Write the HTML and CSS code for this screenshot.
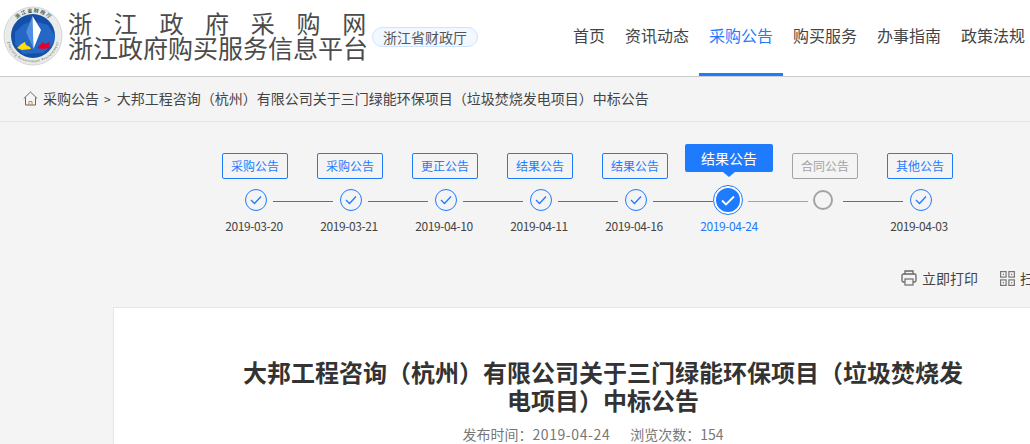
FILE: index.html
```html
<!DOCTYPE html>
<html lang="zh-CN">
<head>
<meta charset="utf-8">
<title>浙江政府采购网</title>
<link rel="stylesheet" href="styles.css">
</head>
<body>
<header class="header">
  <svg class="logo" width="60" height="60" viewBox="0 0 60 60">
    <defs>
      <path id="arcTop" d="M6.500 30a23.500 23.500 0 0 1 47 0"/>
      <path id="arcBottom" d="M3.500 30a26.500 26.500 0 0 0 53 0"/>
    </defs>
    <circle cx="30" cy="30" r="29" fill="#e9ecea" stroke="#d2d6d4"/>
    <circle cx="30" cy="30" r="22" fill="#1450a8"/>
    <path d="M12 26l9-8 10-3 14 4 7 11-3 9-9 8-20 1-8-10z" fill="#2467c4"/>
    <path d="M29.500 10L23 26l7.500 17z" fill="#4d8fe0"/>
    <path d="M29.500 10L38 24l-7.500 19z" fill="#fff"/>
    <path d="M14 42c3-3 5-5 8-6l1 3 4 2 1 2-9 1z" fill="#ffe000"/>
    <path d="M34 42l6-6 2 2 5-2-1 6-6 1z" fill="#e4002b"/>
    <text class="logo-ring" fill="#4a5a55"><textPath href="#arcTop" startOffset="50%" text-anchor="middle">浙 江 省 财 政 厅</textPath></text>
    <text class="logo-ring-small" fill="#5a6a65"><textPath href="#arcBottom" startOffset="50%" text-anchor="middle">Zhejiang Government Procurement</textPath></text>
  </svg>
  <div class="brand">
    <div class="brand-top">浙江政府采购网</div>
    <div class="brand-bottom">浙江政府购买服务信息平台</div>
  </div>
  <span class="badge">浙江省财政厅</span>
  <nav class="nav">
    <a class="nav-item">首页</a>
    <a class="nav-item">资讯动态</a>
    <a class="nav-item is-active">采购公告</a>
    <a class="nav-item">购买服务</a>
    <a class="nav-item">办事指南</a>
    <a class="nav-item">政策法规</a>
  </nav>
</header>

<div class="crumbs">
  <svg class="home" width="15" height="15" viewBox="0 0 15 15" fill="none" stroke="#666" stroke-width="1">
    <path d="M.8 7.500L7.500 1l6.700 6.500"/>
    <path d="M2.500 6.500v7.500h10V6.500"/>
    <path d="M6 14v-3.500h3V14" stroke="#c98a3a"/>
  </svg>
  <span>采购公告</span>
  <span class="sep">&gt;</span>
  <span>大邦工程咨询（杭州）有限公司关于三门绿能环保项目（垃圾焚烧发电项目）中标公告</span>
</div>

<main class="wrap">
  <section class="steps">
    <span class="tag c1">采购公告</span>
    <span class="tag c3">采购公告</span>
    <span class="tag c5">更正公告</span>
    <span class="tag c7">结果公告</span>
    <span class="tag c9">结果公告</span>
    <span class="tag tag-current c11">结果公告</span>
    <span class="tag tag-pending c13">合同公告</span>
    <span class="tag c15">其他公告</span>

    <span class="dot"><svg width="12" height="10" viewBox="0 0 12 10" fill="none" stroke="#1e7bfe" stroke-width="1.300"><path d="M1 5l3.500 3.500L11 1.500"/></svg></span>
    <span class="line"></span>
    <span class="dot"><svg width="12" height="10" viewBox="0 0 12 10" fill="none" stroke="#1e7bfe" stroke-width="1.300"><path d="M1 5l3.500 3.500L11 1.500"/></svg></span>
    <span class="line"></span>
    <span class="dot"><svg width="12" height="10" viewBox="0 0 12 10" fill="none" stroke="#1e7bfe" stroke-width="1.300"><path d="M1 5l3.500 3.500L11 1.500"/></svg></span>
    <span class="line"></span>
    <span class="dot"><svg width="12" height="10" viewBox="0 0 12 10" fill="none" stroke="#1e7bfe" stroke-width="1.300"><path d="M1 5l3.500 3.500L11 1.500"/></svg></span>
    <span class="line"></span>
    <span class="dot"><svg width="12" height="10" viewBox="0 0 12 10" fill="none" stroke="#1e7bfe" stroke-width="1.300"><path d="M1 5l3.500 3.500L11 1.500"/></svg></span>
    <span class="line"></span>
    <span class="dot-current"><span class="dot-current-inner"><svg width="14" height="11" viewBox="0 0 14 11" fill="none" stroke="#fff" stroke-width="1.800"><path d="M1 5.500l4 4L13 1.500"/></svg></span></span>
    <span class="line line-pending line-after"></span>
    <span class="dot-pending"></span>
    <span class="line line-after"></span>
    <span class="dot"><svg width="12" height="10" viewBox="0 0 12 10" fill="none" stroke="#1e7bfe" stroke-width="1.300"><path d="M1 5l3.500 3.500L11 1.500"/></svg></span>

    <span class="date c1">2019-03-20</span>
    <span class="date c3">2019-03-21</span>
    <span class="date c5">2019-04-10</span>
    <span class="date c7">2019-04-11</span>
    <span class="date c9">2019-04-16</span>
    <span class="date date-current c11">2019-04-24</span>
    <span class="date c15">2019-04-03</span>
  </section>

  <div class="tools">
    <span class="tool">
      <svg width="16" height="16" viewBox="0 0 16 16" fill="none" stroke="#666" stroke-width="1.300">
        <path d="M4 4V1h8v3"/>
        <rect x="1" y="4" width="14" height="8" rx="1.500"/>
        <rect x="4" y="9" width="8" height="6" fill="#f4f4f4" stroke="#777"/>
      </svg>
      立即打印
    </span>
    <span class="tool">
      <svg width="15" height="15" viewBox="0 0 15 15" fill="none" stroke="#777" stroke-width="1.200">
        <rect x=".6" y=".6" width="5.500" height="5.500"/>
        <rect x="8.900" y=".6" width="5.500" height="5.500"/>
        <rect x=".6" y="8.900" width="5.500" height="5.500"/>
        <rect x="8.900" y="8.900" width="5.500" height="5.500"/>
        <path d="M3.400 2.800v1.100M11.700 2.800v1.100M3.400 11.100v1.100M11.700 11.100v1.100" stroke="#777"/>
      </svg>
      扫码
    </span>
  </div>

  <article class="card">
    <h1 class="title">大邦工程咨询（杭州）有限公司关于三门绿能环保项目（垃圾焚烧发电项目）中标公告</h1>
    <div class="meta">
      <span>发布时间：<span class="meta-date">2019-04-24</span></span>
      <span>浏览次数：154</span>
    </div>
  </article>
</main>
</body>
</html>
```

FILE: styles.css
```css
html, body {
  margin: 0;
  height: 444px;
  overflow: hidden;
}

body {
  width: 1030px;
  background: #f4f4f4;
  color: #333;
  font-family: "Noto Sans CJK SC", "Noto Sans", sans-serif;
}

.header {
  display: flex;
  align-items: flex-start;
  width: 1100px;
  height: 76px;
  background: #fff;
  border-bottom: 1px solid #ccc;
}

.logo {
  flex: none;
  margin: 6px 0 0 3px;
}

.logo-ring {
  font-size: 5px;
  font-weight: 700;
}

.logo-ring-small {
  font-size: 3.500px;
  letter-spacing: .4px;
}

.brand {
  flex: none;
  margin: 10px 0 0 5px;
  width: 302px;
  color: #4b4b4b;
  font-size: 25px;
  line-height: 25px;
  white-space: nowrap;
}

.brand-top {
  font-size: 24px;
  letter-spacing: 21.700px;
}

.badge {
  flex: none;
  box-sizing: border-box;
  margin: 27px 0 0 2px;
  width: 106px;
  height: 20px;
  border: 1px solid #cfe3ff;
  border-radius: 10px;
  background: #f2f8ff;
  color: #555;
  font-size: 14px;
  line-height: 18px;
  text-align: center;
}

.nav {
  display: flex;
  flex: none;
  margin-left: 85px;
}

.nav-item {
  box-sizing: border-box;
  height: 76px;
  padding: 0 10px;
  color: #444;
  font-size: 16px;
  line-height: 71px;
  white-space: nowrap;
}

.nav-item.is-active {
  border-bottom: 3px solid #1e7bfe;
  color: #1e7bfe;
}

.crumbs {
  display: flex;
  align-items: center;
  width: 1100px;
  height: 42px;
  padding: 0 0 2px 23px;
  border-bottom: 1px solid #e4e4e4;
  color: #444;
  font-size: 14px;
  white-space: nowrap;
}

.home {
  margin-right: 5px;
}

.sep {
  margin: 0 6px 0 5px;
  font-size: 12px;
}

.wrap {
  width: 980px;
  margin-left: 113px;
}

.steps {
  display: grid;
  grid-template-columns: 36px 59px 36px 59px 36px 59px 36px 59px 36px 60px 30px 65px 30px 65px 34px;
  grid-template-rows: 35px 30px auto;
  row-gap: 6px;
  justify-content: start;
  padding: 22px 0 0 124px;
  justify-items: center;
  align-items: center;
}

.tag {
  box-sizing: border-box;
  grid-row: 1;
  align-self: end;
  width: 66px;
  height: 26px;
  border: 1px solid #1e7bfe;
  border-radius: 2px;
  color: #1e7bfe;
  font-size: 12px;
  line-height: 24px;
  text-align: center;
  white-space: nowrap;
}

.c1 { grid-column: 1; }
.c3 { grid-column: 3; }
.c5 { grid-column: 5; }
.c7 { grid-column: 7; }
.c9 { grid-column: 9; }
.c11 { grid-column: 11; }
.c13 { grid-column: 13; }
.c15 { grid-column: 15; }

.tag-current {
  position: relative;
  width: 88px;
  height: 28px;
  margin: 0 0 7px 2px;
  border: 0;
  background: #1e7bfe;
  color: #fff;
  font-size: 14px;
  line-height: 28px;
}

.tag-current::after {
  content: "";
  position: absolute;
  left: 38px;
  top: 28px;
  border: 6px solid transparent;
  border-top: 5px solid #1e7bfe;
  border-bottom: 0;
}

.tag-pending {
  margin-left: 4px;
  border-color: #a3a3a3;
  color: #a3a3a3;
}

.dot {
  display: flex;
  box-sizing: border-box;
  grid-row: 2;
  align-items: center;
  justify-content: center;
  width: 22px;
  height: 22px;
  margin-left: 2px;
  border: 1.500px solid #1e7bfe;
  border-radius: 50%;
}

.dot-current {
  display: flex;
  box-sizing: border-box;
  grid-row: 2;
  align-items: center;
  justify-content: center;
  width: 30px;
  height: 30px;
  border: 1px solid #1e7bfe;
  border-radius: 50%;
  background: #fff;
}

.dot-current-inner {
  display: flex;
  align-items: center;
  justify-content: center;
  width: 24px;
  height: 24px;
  border-radius: 50%;
  background: #1e7bfe;
}

.dot-pending {
  box-sizing: border-box;
  grid-row: 2;
  width: 20px;
  height: 20px;
  border: 2px solid #a3a3a3;
  border-radius: 50%;
}

.line {
  grid-row: 2;
  width: 60px;
  height: 1px;
  margin-top: 2px;
  background: #1e7bfe;
}

.line-after {
  justify-self: end;
}

.line-pending {
  background: #a3a3a3;
}

.date {
  grid-row: 3;
  margin: -4px 2px 0 0;
  color: #444;
  font-size: 12px;
  letter-spacing: -.4px;
  line-height: 18px;
  white-space: nowrap;
}

.date-current {
  margin: -4px 0 0 2px;
  color: #1e7bfe;
}

.tools {
  display: flex;
  gap: 22px;
  margin-top: 33px;
  padding-left: 788px;
  width: 300px;
  height: 20px;
  color: #444;
  font-size: 14px;
  line-height: 20px;
  white-space: nowrap;
}

.tool {
  display: flex;
  flex: none;
  align-items: center;
  gap: 5px;
}

.card {
  box-sizing: border-box;
  height: 400px;
  margin-top: 19px;
  padding: 50px 129px 0;
  border: 1px solid #e6e6e6;
  background: #fff;
  text-align: center;
}

.title {
  margin: 0;
  color: #333;
  font-size: 24px;
  font-weight: 700;
  line-height: 28px;
}

.meta {
  display: flex;
  justify-content: center;
  gap: 20px;
  margin-top: 10px;
  padding-right: 20px;
  color: #777;
  font-size: 14px;
  line-height: 20px;
}

.meta-date {
  letter-spacing: .6px;
}
```
